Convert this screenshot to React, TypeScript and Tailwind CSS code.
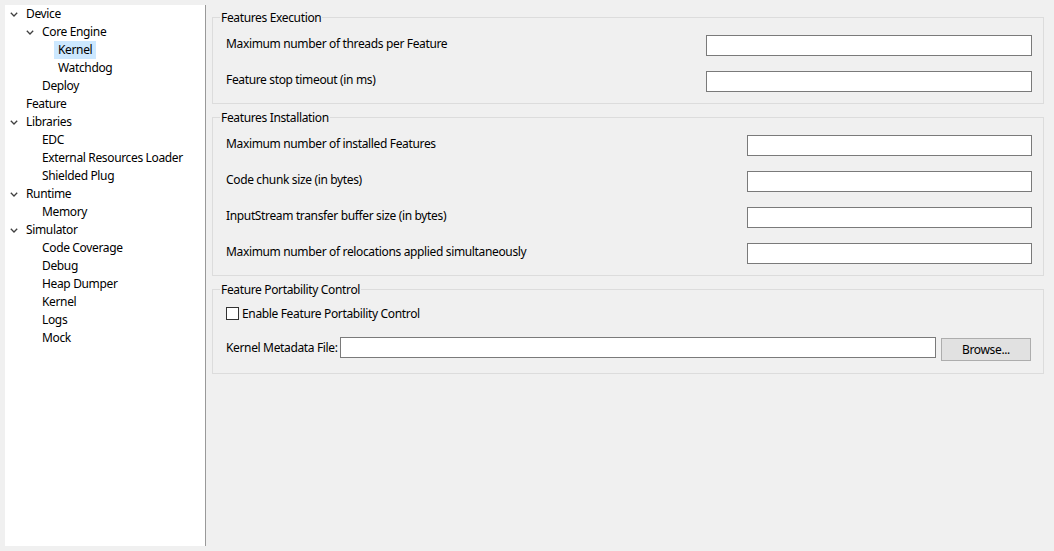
import type { ReactNode } from "react";

type TreeNode = {
  label: string;
  level: 0 | 1 | 2;
  expanded?: boolean;
  selected?: boolean;
};

const TREE: TreeNode[] = [
  { label: "Device", level: 0, expanded: true },
  { label: "Core Engine", level: 1, expanded: true },
  { label: "Kernel", level: 2, selected: true },
  { label: "Watchdog", level: 2 },
  { label: "Deploy", level: 1 },
  { label: "Feature", level: 0 },
  { label: "Libraries", level: 0, expanded: true },
  { label: "EDC", level: 1 },
  { label: "External Resources Loader", level: 1 },
  { label: "Shielded Plug", level: 1 },
  { label: "Runtime", level: 0, expanded: true },
  { label: "Memory", level: 1 },
  { label: "Simulator", level: 0, expanded: true },
  { label: "Code Coverage", level: 1 },
  { label: "Debug", level: 1 },
  { label: "Heap Dumper", level: 1 },
  { label: "Kernel", level: 1 },
  { label: "Logs", level: 1 },
  { label: "Mock", level: 1 },
];

const INDENT = ["pl-0", "pl-[16px]", "pl-[32px]"] as const;

function Chevron() {
  return (
    <svg width="8" height="5" viewBox="0 0 8 5" className="ml-[5px]" aria-hidden="true">
      <path d="M0.8 0.8 L4 4 L7.2 0.8" fill="none" stroke="#404040" strokeWidth="1.3" />
    </svg>
  );
}

function TreeRow({ node }: { node: TreeNode }) {
  return (
    <div className={`flex h-[18px] items-center ${INDENT[node.level]}`}>
      <div className="flex w-[17px] shrink-0 items-center">{node.expanded ? <Chevron /> : null}</div>
      <span
        className={
          node.selected
            ? "flex h-[18px] items-center whitespace-nowrap bg-[#cce8ff] px-[4px]"
            : "flex h-[18px] items-center whitespace-nowrap px-[4px]"
        }
      >
        {node.label}
      </span>
    </div>
  );
}

function Group({ title, children, className }: { title: string; children: ReactNode; className?: string }) {
  return (
    <fieldset className={`border border-[#dcdcdc] pl-[13px] pr-[11px] ${className ?? "pb-[11px]"}`}>
      <legend className="-ml-[6px] px-[1px] leading-[17px]">{title}</legend>
      {children}
    </fieldset>
  );
}

function TextInput({ className }: { className?: string }) {
  return <div className={`h-[21px] border border-[#7a7a7a] bg-white ${className ?? ""}`} />;
}

function FieldRows({ labels, inputWidth }: { labels: string[]; inputWidth: string }) {
  return (
    <div className="mt-[9px] flex flex-col gap-[15px]">
      {labels.map((label) => (
        <div key={label} className="flex items-start justify-between">
          <span className="mt-[1px] whitespace-nowrap leading-[16px]">{label}</span>
          <TextInput className={inputWidth} />
        </div>
      ))}
    </div>
  );
}

export default function App() {
  return (
    <div
      className="flex h-[551px] w-[1054px] bg-[#f0f0f0] text-[12px] tracking-[-0.35px] text-black"
      style={{ fontFamily: '"Noto Sans", "Open Sans", sans-serif' }}
    >
      <aside className="my-[5px] ml-[5px] h-[541px] w-[201px] shrink-0 border-r border-[#999999] bg-white">
        {TREE.map((node, i) => (
          <TreeRow key={i} node={node} />
        ))}
      </aside>

      <main className="flex flex-1 flex-col gap-[5px] pl-[6px] pr-[10px] pt-[9px]">
        <Group title="Features Execution">
          <FieldRows
            labels={["Maximum number of threads per Feature", "Feature stop timeout (in ms)"]}
            inputWidth="w-[326px]"
          />
        </Group>

        <Group title="Features Installation">
          <FieldRows
            labels={[
              "Maximum number of installed Features",
              "Code chunk size (in bytes)",
              "InputStream transfer buffer size (in bytes)",
              "Maximum number of relocations applied simultaneously",
            ]}
            inputWidth="w-[285px]"
          />
        </Group>

        <Group title="Feature Portability Control" className="pb-[12px]">
          <div className="mt-[9px] flex h-[13px] items-center">
            <div className="h-[13px] w-[13px] shrink-0 border border-[#333333] bg-white" />
            <span className="ml-[3px] whitespace-nowrap leading-[16px]">Enable Feature Portability Control</span>
          </div>
          <div className="mt-[17px] flex items-start">
            <span className="mt-[3px] w-[114px] shrink-0 whitespace-nowrap leading-[16px]">Kernel Metadata File:</span>
            <TextInput className="flex-1" />
            <button
              type="button"
              className="ml-[5px] mr-[1px] mt-[1px] h-[23px] w-[90px] shrink-0 border border-[#adadad] bg-[#e1e1e1] leading-[16px]"
            >
              Browse...
            </button>
          </div>
        </Group>
      </main>
    </div>
  );
}
